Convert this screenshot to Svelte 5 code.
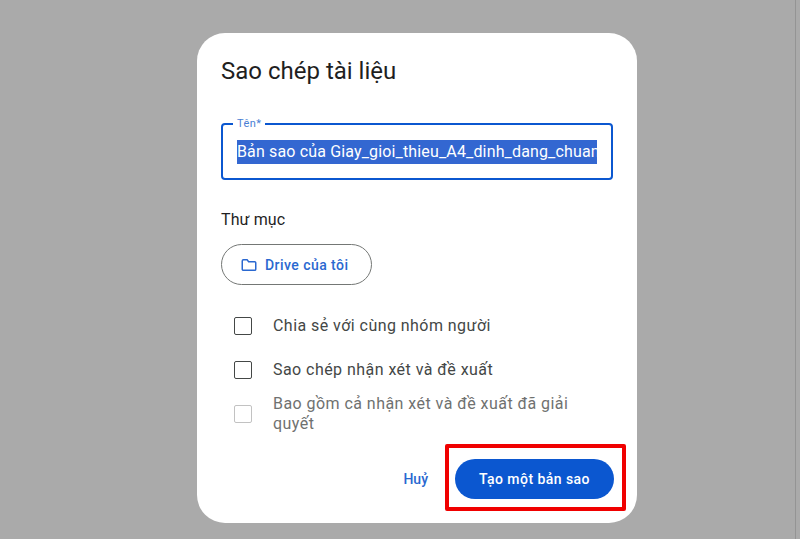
<script lang="ts">
  let fileName = 'Bản sao của Giay_gioi_thieu_A4_dinh_dang_chuan';

  const options = [
    { label: 'Chia sẻ với cùng nhóm người', disabled: false },
    { label: 'Sao chép nhận xét và đề xuất', disabled: false },
    { label: 'Bao gồm cả nhận xét và đề xuất đã giải quyết', disabled: true },
  ];
</script>

<div class="backdrop">
  <div class="dialog">
    <h1>Sao chép tài liệu</h1>

    <div class="field">
      <span class="field-label">Tên*</span>
      <div class="field-value"><span class="selected">{fileName}</span></div>
    </div>

    <div class="folder-label">Thư mục</div>
    <button class="folder-btn">
      <svg viewBox="0 0 24 24" width="18" height="18" fill="none" stroke="currentColor" stroke-width="2">
        <path d="M3 6.5C3 5.7 3.7 5 4.5 5h5l2 2.5h8c.8 0 1.5.7 1.5 1.5v8.5c0 .8-.7 1.5-1.5 1.5h-15C3.700 19 3 18.300 3 17.500z" />
      </svg>
      Drive của tôi
    </button>

    <div class="options">
      {#each options as opt}
        <div class="option" class:disabled={opt.disabled}>
          <span class="box"></span>
          <span class="option-text">{opt.label}</span>
        </div>
      {/each}
    </div>

    <div class="actions">
      <button class="cancel">Huỷ</button>
      <div class="highlight-wrap">
        <button class="primary">Tạo một bản sao</button>
        <span class="highlight"></span>
      </div>
    </div>
  </div>
  <span class="edge"></span>
</div>

<style>
  :global(body) {
    margin: 0;
    background: #aaaaaa;
  }

  .backdrop {
    position: relative;
    width: 800px;
    height: 539px;
    overflow: hidden;
    background: #aaaaaa;
    font-family: Roboto, 'Liberation Sans', sans-serif;
    padding: 33px 0 0 197px;
    box-sizing: border-box;
  }

  .edge {
    position: absolute;
    top: 0;
    bottom: 0;
    right: 4px;
    width: 1px;
    background: #949494;
  }

  .dialog {
    width: 440px;
    height: 490px;
    box-sizing: border-box;
    background: #fff;
    border-radius: 28px;
    padding: 24px 24px 0;
  }

  h1 {
    margin: 0;
    font-size: 24px;
    line-height: 28px;
    font-weight: 400;
    color: #1f1f1f;
  }

  .field {
    position: relative;
    margin-top: 38px;
    width: 392px;
    height: 57px;
    box-sizing: border-box;
    border: 2px solid #0b57d0;
    border-radius: 4px;
    padding: 15px 0 0 14px;
  }

  .field-label {
    position: absolute;
    top: -8px;
    left: 10px;
    padding: 0 4px;
    background: #fff;
    font-size: 11px;
    line-height: 13px;
    letter-spacing: 0.4px;
    color: #4a7fd4;
  }

  .field-value {
    width: 360px;
    font-size: 16px;
    line-height: 24px;
    letter-spacing: 0.15px;
    color: #1f1f1f;
    white-space: nowrap;
    overflow: hidden;
  }

  .selected {
    display: inline-block;
    background: #3367d1;
    color: #fff;
  }

  .folder-label {
    margin-top: 30px;
    font-size: 16px;
    line-height: 20px;
    letter-spacing: 0.1px;
    color: #1f1f1f;
  }

  .folder-btn {
    margin-top: 14px;
    display: flex;
    align-items: center;
    gap: 7px;
    width: 151px;
    height: 41px;
    box-sizing: border-box;
    padding: 0 0 0 18px;
    background: #fff;
    border: 1px solid #747775;
    border-radius: 21px;
    color: #2a68d0;
    font-family: inherit;
    font-size: 14px;
    font-weight: 500;
    letter-spacing: 0.45px;
  }

  .options {
    margin-top: 31px;
    padding-left: 13px;
    display: flex;
    flex-direction: column;
    gap: 24px;
  }

  .option {
    display: flex;
    align-items: center;
    gap: 21px;
    font-size: 16px;
    line-height: 20px;
    letter-spacing: 0.45px;
    color: #444746;
  }

  .option.disabled {
    margin-top: -10px;
    color: #6f7170;
  }

  .box {
    flex: none;
    width: 16px;
    height: 16px;
    border: 1.500px solid #444746;
    border-radius: 2px;
  }

  .option.disabled .box {
    border-color: #c2c2c2;
  }

  .option-text {
    width: 320px;
  }

  .actions {
    margin-top: 25px;
    margin-right: -1px;
    display: flex;
    justify-content: flex-end;
    align-items: center;
    gap: 27px;
  }

  .cancel {
    border: 0;
    background: none;
    padding: 0;
    color: #2a68d0;
    font-family: inherit;
    font-size: 14px;
    font-weight: 500;
  }

  .highlight-wrap {
    position: relative;
  }

  .primary {
    display: block;
    width: 159px;
    height: 40px;
    border: 0;
    border-radius: 20px;
    background: #0b57d0;
    color: #fff;
    font-family: inherit;
    font-size: 14px;
    font-weight: 500;
    letter-spacing: 0.45px;
  }

  .highlight {
    position: absolute;
    top: -15px;
    left: -10px;
    width: 173px;
    height: 59px;
    border: 4px solid #f00000;
    border-radius: 2px;
  }
</style>
